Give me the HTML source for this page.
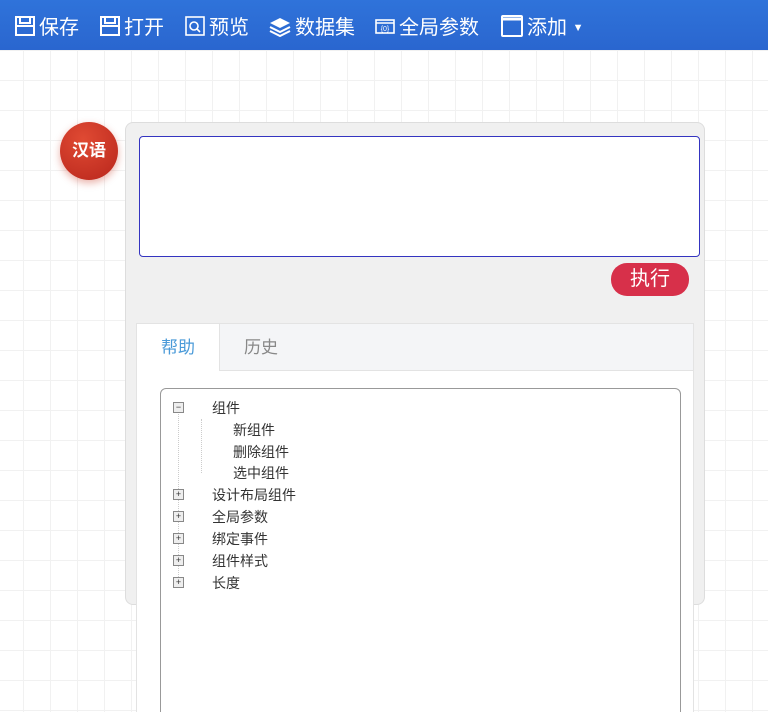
<!DOCTYPE html>
<html><head><meta charset="utf-8"><style>
html,body{margin:0;width:768px;height:712px;overflow:hidden}
body{position:relative;font-family:"Liberation Sans","Noto Sans CJK SC",sans-serif;
background-color:#fff;background-image:linear-gradient(#f1f1f1 1px,transparent 1px),linear-gradient(90deg,#f1f1f1 1px,transparent 1px);background-size:27px 30px;background-position:23px 20px}
.bar{position:absolute;left:0;top:0;width:768px;height:50px;background:linear-gradient(#2f73da,#2a66cf);color:#fff;font-size:20px}
.bar>span{position:absolute;top:11px;white-space:nowrap}
.bar svg{margin-right:3px}
.badge{position:absolute;left:60px;top:122px;width:58px;height:58px;border-radius:50%;background:radial-gradient(circle at 40% 30%,#e04a33,#b8261c);box-shadow:0 3px 8px rgba(200,60,40,.4);color:#fff;font-weight:bold;font-size:17px;text-align:center;line-height:58px}
.panel{position:absolute;left:125px;top:122px;width:578px;height:481px;background:#f0f0f0;border:1px solid #ddd;border-radius:8px}
.ta{position:absolute;left:139px;top:136px;width:559px;height:119px;background:#fff;border:1px solid #3434c0;border-radius:4px}
.btn{position:absolute;left:611px;top:263px;width:78px;height:33px;background:#d7304a;border-radius:16px;color:#fff;font-size:20px;text-align:center;line-height:33px}
.tabs{position:absolute;left:136px;top:323px;width:556px;height:389px;background:#fff;border:1px solid #e3e3e3;border-bottom:none}
.th{position:absolute;left:0;top:0;width:556px;height:46px;background:#f4f5f7;border-bottom:1px solid #e3e3e3}
.t1{position:absolute;left:0;top:0;width:82px;height:47px;background:#fff;border-right:1px solid #e3e3e3;color:#4a9ad8;font-size:17px;line-height:48px;text-align:center}
.t2{position:absolute;left:107px;top:0;color:#888;font-size:17px;line-height:48px}
.tree{position:absolute;left:160px;top:388px;width:519px;height:340px;border:1px solid #999;border-radius:6px;background:#fff}
.n{position:absolute;font-size:14px;color:#333;white-space:nowrap}
.pm{position:absolute;width:9px;height:9px;border:1px solid #888;background:#eee;font-size:9px;line-height:9px;text-align:center;color:#333}
</style></head><body>
<div class="bar">
<span style="left:14px">
<svg width="22" height="22" viewBox="0 0 22 22" style="vertical-align:-3px"><rect x="2" y="2" width="18" height="18" fill="none" stroke="#fff" stroke-width="2"/><path d="M6 2v6h10V2M2 11h18" stroke="#fff" stroke-width="2" fill="none"/></svg>保存</span>
<span style="left:99px"><svg width="22" height="22" viewBox="0 0 22 22" style="vertical-align:-3px"><rect x="2" y="2" width="18" height="18" fill="none" stroke="#fff" stroke-width="2"/><path d="M6 2v6h10V2M2 11h18" stroke="#fff" stroke-width="2" fill="none"/></svg>打开</span>
<span style="left:184px"><svg width="22" height="22" viewBox="0 0 22 22" style="vertical-align:-3px"><rect x="2" y="2" width="18" height="18" fill="none" stroke="#fff" stroke-width="1.6"/><circle cx="10" cy="11" r="4" fill="none" stroke="#fff" stroke-width="1.6"/><path d="M13 14l3 3" stroke="#fff" stroke-width="1.6"/></svg>预览</span>
<span style="left:268px"><svg width="24" height="22" viewBox="0 0 24 22" style="vertical-align:-3px"><path d="M12 3l10 5-10 5-10-5z" fill="#fff"/><path d="M2 12l10 5 10-5M2 16l10 5 10-5" stroke="#fff" stroke-width="2" fill="none"/></svg>数据集</span>
<span style="left:374px"><svg width="22" height="22" viewBox="0 0 22 22" style="vertical-align:-3px"><rect x="2" y="5" width="18" height="13" fill="none" stroke="#fff" stroke-width="1.6"/><path d="M2 8h18" stroke="#fff" stroke-width="1.6"/><text x="11" y="16" font-size="7" fill="#fff" text-anchor="middle">{0}</text></svg>全局参数</span>
<span style="left:500px"><svg width="24" height="24" viewBox="0 0 24 24" style="vertical-align:-4px"><rect x="2" y="2" width="20" height="20" rx="1" fill="none" stroke="#fff" stroke-width="2"/><path d="M2 5h20" stroke="#fff" stroke-width="3"/></svg>添加 <span style="font-size:11px;vertical-align:3px">▼</span></span>
</div>
<div class="badge">汉语</div>
<div class="panel"></div>
<div class="ta"></div>
<div class="btn">执行</div>
<div class="tabs"><div class="th"></div><div class="t1">帮助</div><div class="t2">历史</div>
<div class="tree" style="left:23px;top:64px;height:330px">
<div style="position:absolute;left:17px;top:22px;height:170px;border-left:1px dotted #ccc"></div>
<div style="position:absolute;left:40px;top:30px;height:54px;border-left:1px dotted #ccc"></div>
<div class="pm" style="left:12px;top:13px">−</div><div class="n" style="left:51px;top:9px">组件</div>
<div class="n" style="left:72px;top:31px">新组件</div>
<div class="n" style="left:72px;top:53px">删除组件</div>
<div class="n" style="left:72px;top:74px">选中组件</div>
<div class="pm" style="left:12px;top:100px">+</div><div class="n" style="left:51px;top:96px">设计布局组件</div>
<div class="pm" style="left:12px;top:122px">+</div><div class="n" style="left:51px;top:118px">全局参数</div>
<div class="pm" style="left:12px;top:144px">+</div><div class="n" style="left:51px;top:140px">绑定事件</div>
<div class="pm" style="left:12px;top:166px">+</div><div class="n" style="left:51px;top:162px">组件样式</div>
<div class="pm" style="left:12px;top:188px">+</div><div class="n" style="left:51px;top:184px">长度</div>
</div></div>
</body></html>
